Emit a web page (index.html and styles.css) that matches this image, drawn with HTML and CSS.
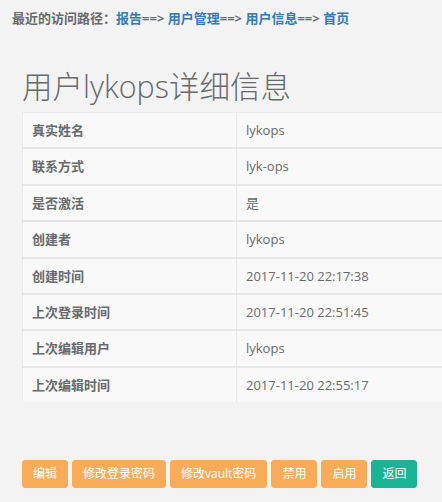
FILE: index.html
```html
<!DOCTYPE html>
<html>
<head>
<meta charset="utf-8">
<link rel="stylesheet" href="styles.css">
</head>
<body>
<div class="breadcrumb">最近的访问路径：<a href="#">报告</a>==&gt; <a href="#">用户管理</a>==&gt; <a href="#">用户信息</a>==&gt; <a href="#">首页</a></div>
<div class="content">
  <h1 class="title">用户lykops详细信息</h1>
  <table class="info">
    <tbody>
      <tr><th>真实姓名</th><td>lykops</td></tr>
      <tr><th>联系方式</th><td>lyk-ops</td></tr>
      <tr><th>是否激活</th><td>是</td></tr>
      <tr><th>创建者</th><td>lykops</td></tr>
      <tr><th>创建时间</th><td>2017-11-20 22:17:38</td></tr>
      <tr><th>上次登录时间</th><td>2017-11-20 22:51:45</td></tr>
      <tr><th>上次编辑用户</th><td>lykops</td></tr>
      <tr><th>上次编辑时间</th><td>2017-11-20 22:55:17</td></tr>
    </tbody>
  </table>
  <div class="actions">
    <a class="btn btn-warning" href="#">编辑</a>
    <a class="btn btn-warning" href="#">修改登录密码</a>
    <a class="btn btn-warning" href="#">修改vault密码</a>
    <a class="btn btn-warning" href="#">禁用</a>
    <a class="btn btn-warning" href="#">启用</a>
    <a class="btn btn-primary" href="#">返回</a>
  </div>
</div>
</body>
</html>
```
FILE: styles.css
```css
html, body {
  margin: 0;
  padding: 0;
  overflow: hidden;
}
body {
  background: #f3f3f4;
  color: #676a6c;
  font-family: "Open Sans", "Noto Sans CJK SC", sans-serif;
  font-size: 13px;
}
.breadcrumb {
  padding: 10px 12px 0;
  font-size: 13px;
  line-height: 16px;
  font-weight: bold;
}
.breadcrumb a {
  color: #337ab7;
  text-decoration: none;
}
.content {
  padding: 0 0 0 22px;
}
.title {
  margin: 42px 0 8px;
  font-size: 30.5px;
  line-height: 36px;
  font-weight: 300;
  color: #676a6c;
}
.info {
  width: 100%;
  border-collapse: collapse;
  background: #f9f9f9;
  border-left: 1px solid #ececec;
}
.info th, .info td {
  height: 18.4px;
  padding: 8px 9px;
  line-height: 18.4px;
  text-align: left;
  border-top: 2px solid #e7e7e7;
  font-size: 13px;
}
.info tr:first-child th, .info tr:first-child td {
  border-top: 1px solid #ececec;
}
.info th {
  width: 195px;
  font-weight: bold;
  border-right: 1px solid #e7e7e7;
}
.info td {
  font-weight: normal;
}
.actions {
  margin-top: 58px;
  display: flex;
  gap: 4px;
}
.btn {
  display: inline-block;
  padding: 5px 10px;
  font-size: 12px;
  line-height: 16px;
  border-radius: 3px;
  border: 1px solid transparent;
  color: #fff;
  text-decoration: none;
}
.btn-warning {
  background: #f8ac59;
  border-color: #f8ac59;
}
.btn-primary {
  background: #1ab394;
  border-color: #1ab394;
}
```
